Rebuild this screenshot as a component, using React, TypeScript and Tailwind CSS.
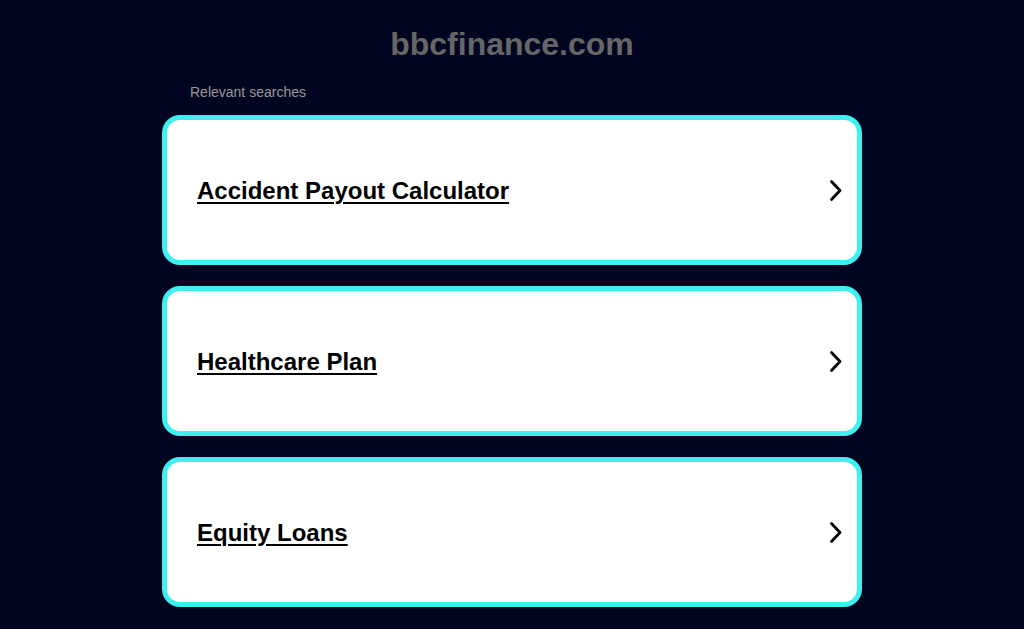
const searches = ["Accident Payout Calculator", "Healthcare Plan", "Equity Loans"];

function Chevron() {
  return (
    <svg width="16" height="24" viewBox="0 0 16 24" fill="none">
      <path d="M4.5 3.5l8.5 9-8.5 9" stroke="#000" strokeWidth="2.8" strokeLinecap="round" strokeLinejoin="round" />
    </svg>
  );
}

export default function App() {
  return (
    <div className="min-h-[629px] bg-[#020520] font-['Liberation_Sans',Arial,sans-serif]">
      <div className="w-[700px] mx-auto">
        <h1 className="pt-[26px] text-center text-[32px] leading-[36px] font-bold text-[#666666]">bbcfinance.com</h1>
        <div className="pt-[22px] pl-[28px] text-[14px] leading-[16px] text-[#999999]">Relevant searches</div>
        <div className="pt-[15px] flex flex-col gap-[21px]">
          {searches.map((s) => (
            <a
              key={s}
              href="#"
              className="h-[150px] flex items-center justify-between bg-white border-[5px] border-[#3ef0f0] rounded-[18px] pl-[30px] pr-[14px]"
            >
              <span className="mt-[2px] text-[24px] font-bold text-black underline underline-offset-[3px] decoration-[2px]">{s}</span>
              <Chevron />
            </a>
          ))}
        </div>
      </div>
    </div>
  );
}
